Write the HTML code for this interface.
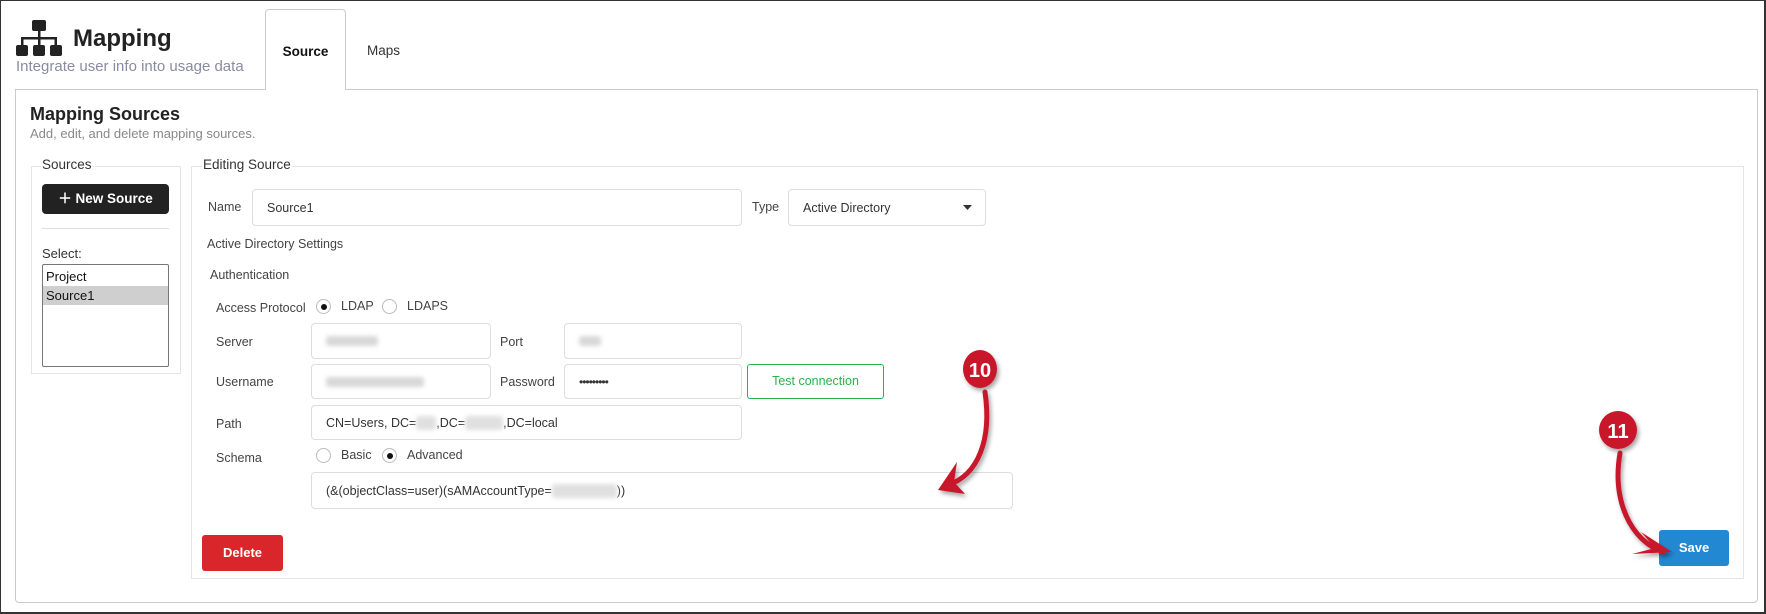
<!DOCTYPE html>
<html><head><meta charset="utf-8"><style>
*{box-sizing:border-box;margin:0;padding:0}
body{width:1766px;height:614px;background:#fff;font-family:"Liberation Sans",sans-serif;color:#333;position:relative;overflow:hidden}
.a{position:absolute}
.frame{left:0;top:0;width:1766px;height:614px;border:2px solid #333;border-left-width:1px;border-top-width:1px}
.lbl{position:absolute;font-size:12.5px;color:#444;line-height:16px}
.inp{position:absolute;border:1px solid #ddd;border-radius:4px;background:#fff;font-size:12.5px;color:#333;padding-left:14px;display:flex;align-items:center}
.blur{display:inline-block;background:#d8d8d8;filter:blur(2px);height:10px;border-radius:3px}
.radio{position:absolute;width:15px;height:15px;border:1px solid #bbb;border-radius:50%;background:#fff}
.radio.on::after{content:"";position:absolute;left:3.5px;top:3.5px;width:6px;height:6px;border-radius:50%;background:#111}
.fs{position:absolute;border:1px solid #e4e4e4}
.leg{position:absolute;background:#fff;font-size:13.5px;color:#333;padding:0 1px;line-height:16px}
</style></head><body>
<div class="a frame"></div>

<svg class="a" style="left:16px;top:20px" width="46" height="37" viewBox="0 0 46 37">
<rect x="16" y="0" width="14" height="11" rx="2" fill="#222"/>
<rect x="22" y="11" width="2.5" height="7" fill="#222"/>
<rect x="5" y="17" width="36" height="2.5" fill="#222"/>
<rect x="5" y="17" width="2.5" height="8" fill="#222"/>
<rect x="22" y="17" width="2.5" height="8" fill="#222"/>
<rect x="38.5" y="17" width="2.5" height="8" fill="#222"/>
<rect x="0" y="25" width="12" height="11" rx="2" fill="#222"/>
<rect x="17" y="25" width="12" height="11" rx="2" fill="#222"/>
<rect x="34" y="25" width="12" height="11" rx="2" fill="#222"/>
</svg>
<div class="a" style="left:73px;top:24px;font-size:24px;font-weight:bold;color:#222;line-height:30px">Mapping</div>
<div class="a" style="left:16px;top:58px;font-size:15px;color:#8a8aa2;line-height:18px">Integrate user info into usage data</div>

<div class="a" style="left:15px;top:89px;width:1743px;height:514px;border:1px solid #ccc;border-radius:0 0 4px 4px"></div>
<div class="a" style="left:265px;top:9px;width:81px;height:81px;border:1px solid #ccc;border-bottom:none;border-radius:4px 4px 0 0;background:#fff;font-size:13.5px;font-weight:bold;color:#111;text-align:center;line-height:84px">Source</div>
<div class="a" style="left:367px;top:43px;font-size:13.5px;color:#333">Maps</div>

<div class="a" style="left:30px;top:104px;font-size:18px;font-weight:bold;color:#222">Mapping Sources</div>
<div class="a" style="left:30px;top:126px;font-size:13px;color:#888">Add, edit, and delete mapping sources.</div>

<div class="fs" style="left:31px;top:166px;width:150px;height:208px"></div>
<div class="leg" style="left:41px;top:157px">Sources</div>
<div class="a" style="left:42px;top:184px;width:127px;height:30px;background:#222;border-radius:4px;color:#fff;font-size:13.5px;font-weight:bold;line-height:30px;text-align:center">&#xFF0B; New Source</div>
<div class="a" style="left:42px;top:228px;width:127px;height:1px;background:#ddd"></div>
<div class="a" style="left:42px;top:246px;font-size:13px;color:#333">Select:</div>
<div class="a" style="left:42px;top:264px;width:127px;height:103px;border:1px solid #777;border-radius:2px;font-size:13px;color:#111">
<div style="padding:3px 3px 0;line-height:18px">Project</div>
<div style="background:#cfcfcf;padding:0 3px;line-height:19px">Source1</div>
</div>

<div class="fs" style="left:191px;top:166px;width:1553px;height:413px"></div>
<div class="leg" style="left:202px;top:157px">Editing Source</div>

<div class="lbl" style="left:208px;top:199px">Name</div>
<div class="inp" style="left:252px;top:189px;width:490px;height:37px">Source1</div>
<div class="lbl" style="left:752px;top:199px">Type</div>
<div class="inp" style="left:788px;top:189px;width:198px;height:37px">Active Directory</div>
<svg class="a" style="left:963px;top:205px" width="9" height="5"><path d="M0 0H9L4.5 5Z" fill="#333"/></svg>

<div class="lbl" style="left:207px;top:236px">Active Directory Settings</div>
<div class="lbl" style="left:210px;top:267px">Authentication</div>

<div class="lbl" style="left:216px;top:300px">Access Protocol</div>
<div class="radio on" style="left:316px;top:299px"></div>
<div class="lbl" style="left:341px;top:298px">LDAP</div>
<div class="radio" style="left:382px;top:299px"></div>
<div class="lbl" style="left:407px;top:298px">LDAPS</div>

<div class="lbl" style="left:216px;top:334px">Server</div>
<div class="inp" style="left:311px;top:323px;width:180px;height:36px"><span class="blur" style="width:52px"></span></div>
<div class="lbl" style="left:500px;top:334px">Port</div>
<div class="inp" style="left:564px;top:323px;width:178px;height:36px"><span class="blur" style="width:22px"></span></div>

<div class="lbl" style="left:216px;top:374px">Username</div>
<div class="inp" style="left:311px;top:364px;width:180px;height:35px"><span class="blur" style="width:98px"></span></div>
<div class="lbl" style="left:500px;top:374px">Password</div>
<div class="inp" style="left:564px;top:364px;width:178px;height:35px;font-size:12px;letter-spacing:-1px">&#8226;&#8226;&#8226;&#8226;&#8226;&#8226;&#8226;&#8226;&#8226;</div>
<div class="a" style="left:747px;top:364px;width:137px;height:35px;border:1px solid #2ab34a;border-radius:3px;color:#2ab34a;font-size:12.5px;text-align:center;line-height:33px">Test connection</div>

<div class="lbl" style="left:216px;top:416px">Path</div>
<div class="inp" style="left:311px;top:405px;width:431px;height:35px">CN=Users, DC=<span class="blur" style="width:20px;height:14px;background:#e0e0e0"></span>,DC=<span class="blur" style="width:38px;height:14px;background:#e0e0e0"></span>,DC=local</div>

<div class="lbl" style="left:216px;top:450px">Schema</div>
<div class="radio" style="left:316px;top:448px"></div>
<div class="lbl" style="left:341px;top:447px">Basic</div>
<div class="radio on" style="left:382px;top:448px"></div>
<div class="lbl" style="left:407px;top:447px">Advanced</div>

<div class="inp" style="left:311px;top:472px;width:702px;height:37px">(&amp;(objectClass=user)(sAMAccountType=<span class="blur" style="width:65px;height:14px;background:#e0e0e0"></span>))</div>

<div class="a" style="left:202px;top:535px;width:81px;height:36px;background:#d9262a;border-radius:3px;color:#fff;font-size:13px;font-weight:bold;text-align:center;line-height:36px">Delete</div>
<div class="a" style="left:1659px;top:530px;width:70px;height:36px;background:#2388d2;border-radius:3px;color:#fff;font-size:13px;font-weight:bold;text-align:center;line-height:36px">Save</div>

<svg class="a" style="left:0;top:0" width="1766" height="614">
<defs><filter id="sh" x="-50%" y="-50%" width="200%" height="200%"><feDropShadow dx="2" dy="3" stdDeviation="2" flood-color="#000" flood-opacity="0.35"/></filter></defs>
<g filter="url(#sh)">
<path d="M985 392 C992 440 978 475 948 485" fill="none" stroke="#c8182c" stroke-width="5" stroke-linecap="round"/>
<path d="M938 490 L957 462 L954 482 L965 494 Z" fill="#c8182c"/>
<ellipse cx="980" cy="369" rx="17" ry="19" fill="#c8182c"/>
<path d="M1620 453 C1612 500 1630 540 1663 552" fill="none" stroke="#c8182c" stroke-width="5" stroke-linecap="round"/>
<path d="M1672 552 L1641 532 L1655 548 L1632 554 Z" fill="#c8182c"/>
<circle cx="1618" cy="430" r="19" fill="#c8182c"/>
</g>
<text x="980" y="377" text-anchor="middle" font-family="Liberation Sans" font-weight="bold" font-size="20" fill="#fff">10</text>
<text x="1618" y="438" text-anchor="middle" font-family="Liberation Sans" font-weight="bold" font-size="20" fill="#fff">11</text>
</svg>
</body></html>
